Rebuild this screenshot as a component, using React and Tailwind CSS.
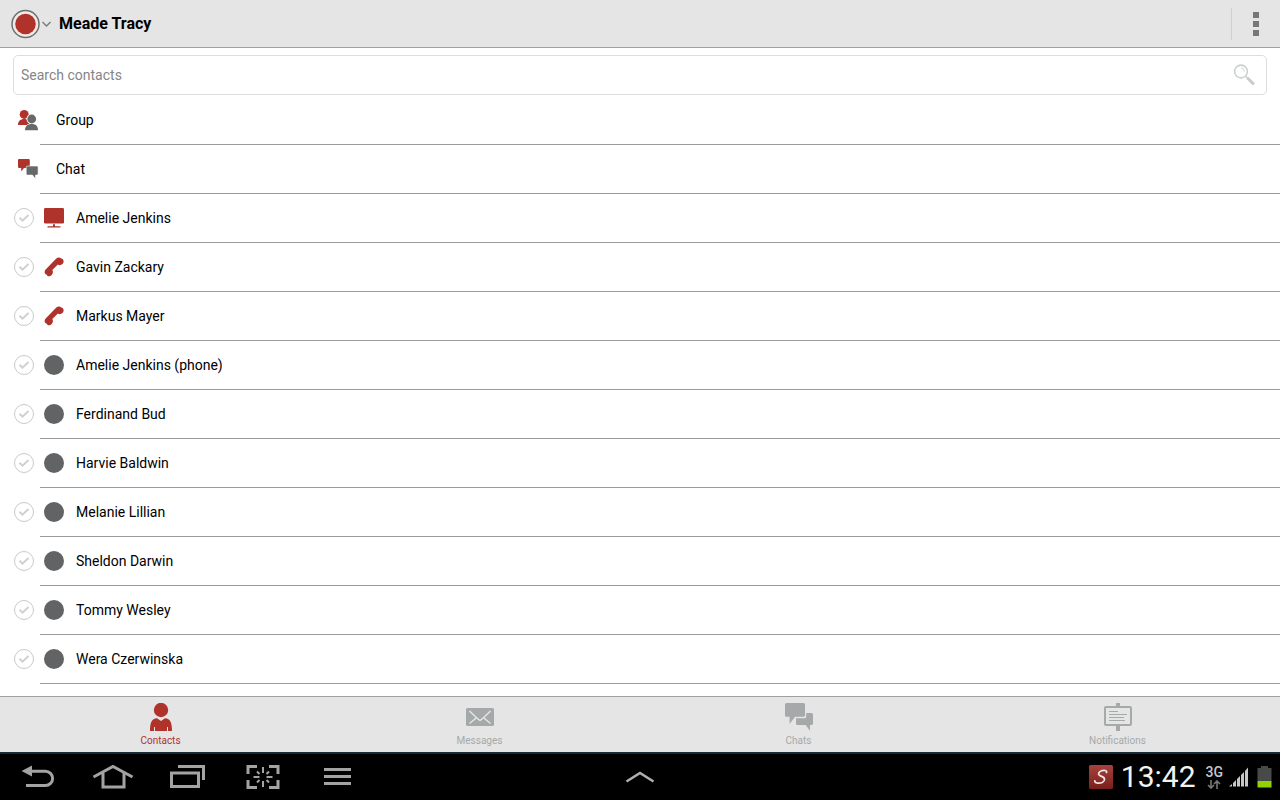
import React, { useState } from "react";

const StatusIcon = () => (
  <svg width="40" height="30" viewBox="0 0 40 30" fill="none">
    <circle cx="14.5" cy="15" r="13.5" fill="#f5e9e6" stroke="#6b7173" strokeWidth="1.5" />
    <circle cx="14.5" cy="15" r="10.3" fill="#b0332b" />
    <path d="M31.5 13l4 4 4-4" stroke="#777" strokeWidth="1.3" />
  </svg>
);

const SearchIcon = () => (
  <svg width="22" height="22" viewBox="0 0 22 22" fill="none">
    <circle cx="8" cy="7.5" r="6.4" stroke="#cdd0d0" strokeWidth="1.6" />
    <path d="M8 4.2a3.4 3.4 0 0 1 3.4 3.4" stroke="#dcdede" strokeWidth="1.2" />
    <path d="M12.7 12.2l2 2" stroke="#cdd0d0" strokeWidth="1.5" />
    <path d="M15 14.5l5 5" stroke="#c8cbcb" strokeWidth="3" strokeLinecap="round" />
  </svg>
);

const GroupIcon = () => (
  <svg width="22" height="22" viewBox="0 0 22 22">
    <circle cx="7.2" cy="5.4" r="4.5" fill="#b0332b" />
    <path d="M1 16c0-4 2.500-6 6.200-6s6 2 6 6z" fill="#b0332b" />
    <circle cx="14.7" cy="10" r="5.2" fill="#fff" />
    <path d="M7.200 22c0-5 2.800-7.600 7.500-7.600S22 17 22 22z" fill="#fff" />
    <circle cx="14.7" cy="10" r="4.4" fill="#66686a" />
    <path d="M8 21.200c0-4.200 2.600-6.200 6.700-6.200s6.300 2 6.300 6.200z" fill="#66686a" />
  </svg>
);

const ChatIcon = () => (
  <svg width="22" height="22" viewBox="0 0 22 22">
    <path
      d="M2 1h9.500q1.300 0 1.300 1.300v6.400q0 1.300-1.300 1.300H7l-2.800 3.500V10H2.200Q1 10 1 8.700V2.300Q1 1 2 1z"
      fill="#b0332b"
    />
    <path
      d="M10.500 8h9.300q1.300 0 1.300 1.300v6.500q0 1.300-1.300 1.300h-1.300v4l-3-4h-5q-1.300 0-1.300-1.300V9.300Q9.200 8 10.500 8z"
      fill="#66686a"
      stroke="#fff"
      strokeWidth=".6"
    />
  </svg>
);

const DesktopIcon = () => (
  <svg width="20" height="20" viewBox="0 0 20 20" fill="#b0332b">
    <rect width="20" height="15.5" rx="1.2" />
    <path d="M9 16.300h2V18.300h5.500v1.300h-13v-1.300H9z" />
  </svg>
);

const PhoneIcon = () => (
  <svg width="20" height="20" viewBox="0 0 20 20" fill="#b0332b">
    <path d="M12.300 1.600c1.400-1.400 3.700-1.400 4.900-.2 2.600.3 3.300 3.700 1.300 5.700-1.400 1.300-3.500 1.500-4.600.5L8.300 13c1 1.300.8 3.500-.6 5-1.600 1.700-4.200 1.600-4.900-.3C.3 17.200-.1 14 1.900 12.200z" />
  </svg>
);

const OfflineIcon = () => (
  <svg width="20" height="20" viewBox="0 0 20 20">
    <circle cx="10" cy="10" r="10" fill="#626365" />
  </svg>
);

const presenceIcons = {
  desktop: DesktopIcon,
  phone: PhoneIcon,
  offline: OfflineIcon,
};

const ContactsTabIcon = () => (
  <svg width="28" height="28" viewBox="0 0 28 28" fill="currentColor">
    <circle cx="14" cy="7" r="7.2" />
    <path d="M3 28c0-8 1.500-12.500 7-12.800l4 2.800 4-2.800c5.500.3 7 4.800 7 12.800h-4v-4h-1v4H8v-4H7v4z" />
  </svg>
);

const MessagesTabIcon = () => (
  <svg width="28" height="28" viewBox="0 0 28 28" fill="none">
    <rect y="5" width="28" height="18" rx="1.500" fill="currentColor" />
    <path
      d="M3.500 8l7.300 7 3.200 2.500 3.200-2.500 7.300-7M3.500 20.500l7.300-6M24.500 20.500l-7.300-6"
      stroke="#e5e5e5"
      strokeWidth="1.500"
    />
  </svg>
);

const ChatsTabIcon = () => (
  <svg width="28" height="28" viewBox="0 0 28 28" fill="currentColor">
    <path d="M1.500 0h17q1.500 0 1.500 1.500v10.800q0 1.500-1.500 1.500H10L4.600 21v-7.200H1.500q-1.500 0-1.500-1.500V1.500Q0 0 1.500 0z" />
    <path d="M21.200 10h5.300q1.500 0 1.500 1.500v9q0 1.500-1.500 1.500H25v5.800L20.700 22h-8.200q-1.500 0-1.500-1.500v-5.300h8.700q1.500 0 1.500-1.500z" />
  </svg>
);

const NotificationsTabIcon = () => (
  <svg width="28" height="28" viewBox="0 0 28 28" fill="none" stroke="currentColor">
    <rect x="1" y="4" width="26" height="18" rx="1" strokeWidth="2" />
    <path d="M14 0v4M14 22v6" strokeWidth="4" />
    <path d="M5 8.500h9M5 11.500h18M5 14.500h15M5 17.500h16" strokeWidth="1" />
  </svg>
);

const BackIcon = () => (
  <svg width="34" height="26" viewBox="0 0 34 26" fill="none">
    <path d="M.5 7L11 1.500v11z" fill="#a3a3a3" />
    <path d="M10 7.300h14.500a7.100 7.100 0 0 1 0 14.200H5" stroke="#a3a3a3" strokeWidth="3" />
  </svg>
);

const HomeIcon = () => (
  <svg width="42" height="28" viewBox="0 0 42 28" fill="none" stroke="#a3a3a3" strokeWidth="3">
    <path d="M1.500 14L21 3.500 40.500 14" />
    <path d="M11 10v14h21V10" />
  </svg>
);

const RecentsIcon = () => (
  <svg width="38" height="26" viewBox="0 0 38 26" fill="none" stroke="#a3a3a3" strokeWidth="3">
    <path d="M9 2.500h25.500V16" />
    <path d="M2.500 9h27v13.500h-27z" />
  </svg>
);

const CaptureIcon = () => (
  <svg width="34" height="26" viewBox="0 0 34 26" fill="none" stroke="#a3a3a3">
    <path d="M2 10V2.500h9M23 2.500h9V10M32 16v7.500h-9M11 23.500H2V16" strokeWidth="3" />
    <path
      d="M17 3v6M17 17v6M7.500 13h6M20.500 13h6M11 7.500l2.500 2.500M23 7.500L20.500 10M11 18.500l2.500-2.500M23 18.500L20.500 16"
      strokeWidth="2"
    />
  </svg>
);

const MenuIcon = () => (
  <svg width="28" height="18" viewBox="0 0 28 18" fill="#a3a3a3">
    <path d="M0 0h27v3H0zM0 7h27v3H0zM0 14h27v3H0z" />
  </svg>
);

const systemButtons = [
  { name: "Back", Icon: BackIcon },
  { name: "Home", Icon: HomeIcon },
  { name: "Recent apps", Icon: RecentsIcon },
  { name: "Screen capture", Icon: CaptureIcon },
  { name: "Menu", Icon: MenuIcon },
];

const tabs = [
  { name: "Contacts", Icon: ContactsTabIcon },
  { name: "Messages", Icon: MessagesTabIcon },
  { name: "Chats", Icon: ChatsTabIcon },
  { name: "Notifications", Icon: NotificationsTabIcon },
];

const contacts = [
  { name: "Amelie Jenkins", presence: "desktop" },
  { name: "Gavin Zackary", presence: "phone" },
  { name: "Markus Mayer", presence: "phone" },
  { name: "Amelie Jenkins (phone)", presence: "offline" },
  { name: "Ferdinand Bud", presence: "offline" },
  { name: "Harvie Baldwin", presence: "offline" },
  { name: "Melanie Lillian", presence: "offline" },
  { name: "Sheldon Darwin", presence: "offline" },
  { name: "Tommy Wesley", presence: "offline" },
  { name: "Wera Czerwinska", presence: "offline" },
];

const Header = () => (
  <header className="flex h-12 shrink-0 items-center border-b border-[#a0a0a0] bg-[#e5e5e5] pt-px pl-[11px]">
    <button aria-label="Change status" className="flex">
      <StatusIcon />
    </button>
    <h1 className="ml-2 flex-1 text-base font-bold">Meade Tracy</h1>
    <button
      aria-label="More options"
      className="flex h-8 w-[49px] items-center justify-center border-l border-[#cfcfcf]"
    >
      <svg width="6" height="24" viewBox="0 0 6 24" fill="#777">
        <path d="M0 0h6v6H0zM0 9h6v6H0zM0 18h6v6H0z" />
      </svg>
    </button>
  </header>
);

const SectionRow = ({ name, Icon }) => (
  <li className="h-12">
    <button className="flex h-full w-full items-center pl-[17px] text-left">
      <Icon />
      <span className="ml-[17px]">{name}</span>
    </button>
  </li>
);

const ContactRow = ({ name, presence }) => {
  const [checked, setChecked] = useState(false);
  const Icon = presenceIcons[presence];

  return (
    <li className="h-12">
      <label className="flex h-full items-center pl-[14px]">
        <span className="relative flex size-5">
          <input
            type="checkbox"
            checked={checked}
            onChange={() => setChecked(!checked)}
            className="peer size-5 appearance-none rounded-full border border-[#c9caca]"
          />
          <svg
            className="pointer-events-none absolute inset-0 text-[#cfd0d0] peer-checked:text-[#b0332b]"
            viewBox="0 0 20 20"
            fill="none"
          >
            <path d="M5.500 9.700l3 3 6-5.700" stroke="currentColor" strokeWidth="2" />
          </svg>
        </span>
        <span className="ml-2.5">
          <Icon />
        </span>
        <span className="ml-3">{name}</span>
      </label>
    </li>
  );
};

const Divider = () => <li role="separator" className="ml-10 h-px bg-[#999b9b]" />;

const TabBar = ({ active, onSelect }) => (
  <nav className="grid h-14 shrink-0 grid-cols-4 border-t border-[#a0a0a0] bg-[#e5e5e5] pr-1">
    {tabs.map(({ name, Icon }) => (
      <button
        key={name}
        onClick={() => onSelect(name)}
        className={
          active === name
            ? "flex flex-col items-center pt-1.5 pl-0.5 text-[#b0332b]"
            : "flex flex-col items-center pt-1.5 pl-0.5 text-[#a5a9a9]"
        }
      >
        <Icon />
        <span className="mt-1 text-[10px] leading-3">{name}</span>
      </button>
    ))}
  </nav>
);

const SystemBar = () => (
  <footer className="grid h-12 shrink-0 grid-cols-[1fr_auto_1fr] items-center border-t-2 border-[#142a36] bg-black">
    <div className="flex">
      {systemButtons.map(({ name, Icon }) => (
        <button key={name} aria-label={name} className="flex h-11 w-[75px] items-center justify-center">
          <Icon />
        </button>
      ))}
    </div>
    <button aria-label="Show tray">
      <svg width="30" height="14" viewBox="0 0 30 14" fill="none">
        <path d="M1.500 11.500L15 3l13.500 8.500" stroke="#b0b0b0" strokeWidth="2.500" />
      </svg>
    </button>
    <div className="flex items-center justify-end pr-2">
      <svg width="24" height="24" viewBox="0 0 24 24" fill="none">
        <defs>
          <linearGradient id="badge" x1="0" y1="0" x2="0" y2="1">
            <stop offset="0" stopColor="#a8423c" />
            <stop offset="1" stopColor="#7a1f1b" />
          </linearGradient>
        </defs>
        <rect width="24" height="24" rx="1.500" fill="url(#badge)" />
        <path
          d="M17.500 7.500c.8-2.200-2.500-2.700-5-1.700-2.700 1.100-4 3.400-1.800 4.700 2 1.200 4.800 1.300 4.800 3.700 0 2.600-3.200 4-6 4-2.400 0-4-1-3.700-2.400"
          stroke="#f3e9e8"
          strokeWidth="1.700"
          strokeLinecap="round"
        />
      </svg>
      <time className="ml-2 text-[30px] leading-8 text-[#f2f2f2]">13:42</time>
      <div className="ml-2.5 flex flex-col items-center text-[#c8c8c8]">
        <span className="text-sm leading-3 font-medium">3G</span>
        <svg
          className="mt-0.5"
          width="14"
          height="9"
          viewBox="0 0 14 9"
          fill="none"
          stroke="#777"
          strokeWidth="1.600"
        >
          <path d="M4 0v8M1 5l3 3 3-3M10 9V1M7 4l3-3 3 3" />
        </svg>
      </div>
      <svg className="ml-1.5" width="20" height="20" viewBox="0 0 20 20" fill="#c8c8c8">
        <path d="M0 19.500L3 17v2.500zM4 16l3-3v6.500H4zM8 12l3-3v10.500H8zM12 8l3-3v14.500h-3zM16 4l3-3.500v19h-3z" />
      </svg>
      <svg className="ml-2" width="15" height="22" viewBox="0 0 15 22">
        <path d="M4 0h7v2h3.500v13H.5V2H4z" fill="#484a4a" />
        <path d="M.5 15h14v6.500H.5z" fill="#8fd400" />
      </svg>
    </div>
  </footer>
);

const App = () => {
  const [activeTab, setActiveTab] = useState("Contacts");

  return (
    <div className="flex min-h-screen flex-col bg-white font-[Roboto,sans-serif] text-sm text-black">
      <Header />
      <main className="flex-1">
        <div className="mx-[13px] mt-[7px] flex h-10 items-center rounded-[5px] border border-[#dcdddd] pr-[11px] pl-[7px]">
          <input
            type="search"
            aria-label="Search contacts"
            placeholder="Search contacts"
            className="h-full flex-1 outline-none placeholder:text-[#858585]"
          />
          <SearchIcon />
        </div>
        <ul className="mt-px">
          <SectionRow name="Group" Icon={GroupIcon} />
          <Divider />
          <SectionRow name="Chat" Icon={ChatIcon} />
          <Divider />
          {contacts.map((contact) => (
            <React.Fragment key={contact.name}>
              <ContactRow {...contact} />
              <Divider />
            </React.Fragment>
          ))}
        </ul>
      </main>
      <TabBar active={activeTab} onSelect={setActiveTab} />
      <SystemBar />
    </div>
  );
};

export default App;
